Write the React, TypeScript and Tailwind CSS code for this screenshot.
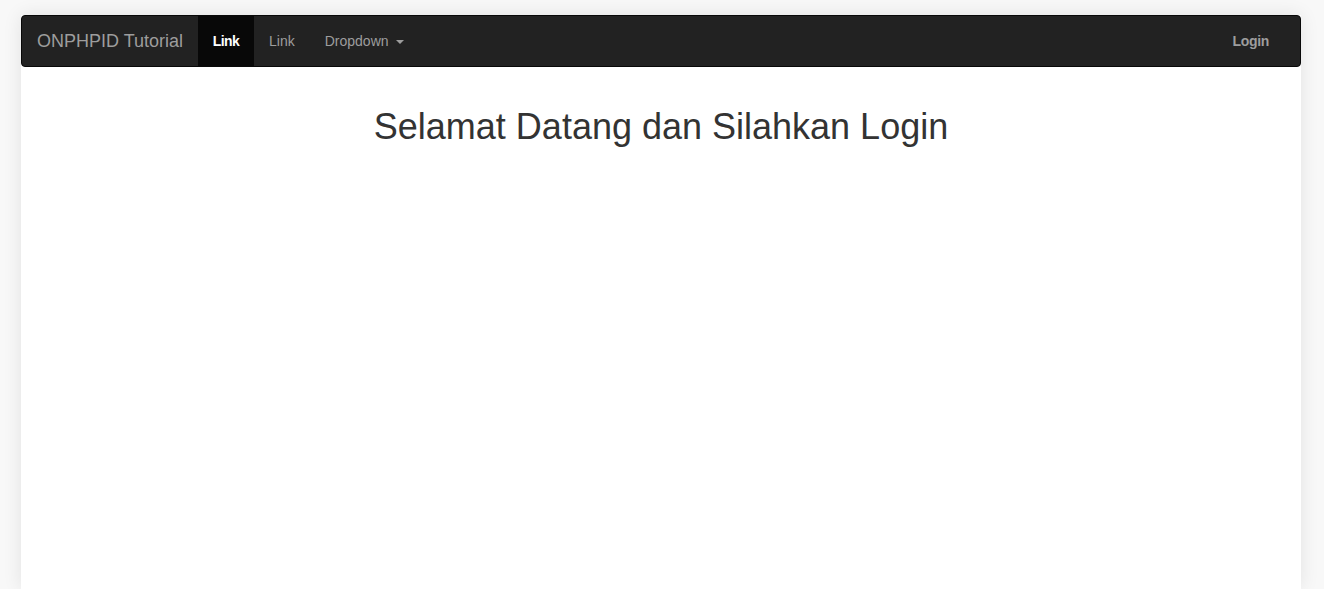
export default function App() {
  return (
    <div
      className="min-h-[589px] bg-[#f8f8f8] pl-[21px] pr-[23px] pt-[15px]"
      style={{ fontFamily: '"Liberation Sans", Arial, sans-serif' }}
    >
      <div className="min-h-[574px] bg-white shadow-[0_0_18px_rgba(0,0,0,0.09)]">
        <nav className="flex h-[52px] items-stretch rounded-[4px] border border-[#080808] bg-[#222222]">
          <span className="flex h-[50px] items-center px-[15px] text-[18px] leading-[20px] text-[#9d9d9d]">
            ONPHPID Tutorial
          </span>
          <ul className="flex">
            <li className="flex h-[50px] w-[56px] items-center justify-center bg-[#080808] text-[14px] font-bold leading-[20px] tracking-[-0.6px] text-white">
              Link
            </li>
            <li className="flex h-[50px] items-center px-[15px] text-[14px] leading-[20px] text-[#9d9d9d]">
              Link
            </li>
            <li className="flex h-[50px] items-center px-[15px] text-[14px] leading-[20px] text-[#9d9d9d]">
              Dropdown
              <span className="ml-[7px] mt-[1px] inline-block h-0 w-0 border-x-[4px] border-t-[4px] border-x-transparent border-t-[#9d9d9d]" />
            </li>
          </ul>
          <div className="ml-auto flex">
            <span className="flex h-[50px] items-center pl-[15px] pr-[31px] text-[14px] font-bold leading-[20px] tracking-[-0.3px] text-[#9d9d9d]">
              Login
            </span>
          </div>
        </nav>
        <h1 className="mt-[40px] text-center text-[36px] font-normal leading-[39.6px] text-[#333333]">
          Selamat Datang dan Silahkan Login
        </h1>
      </div>
    </div>
  );
}
